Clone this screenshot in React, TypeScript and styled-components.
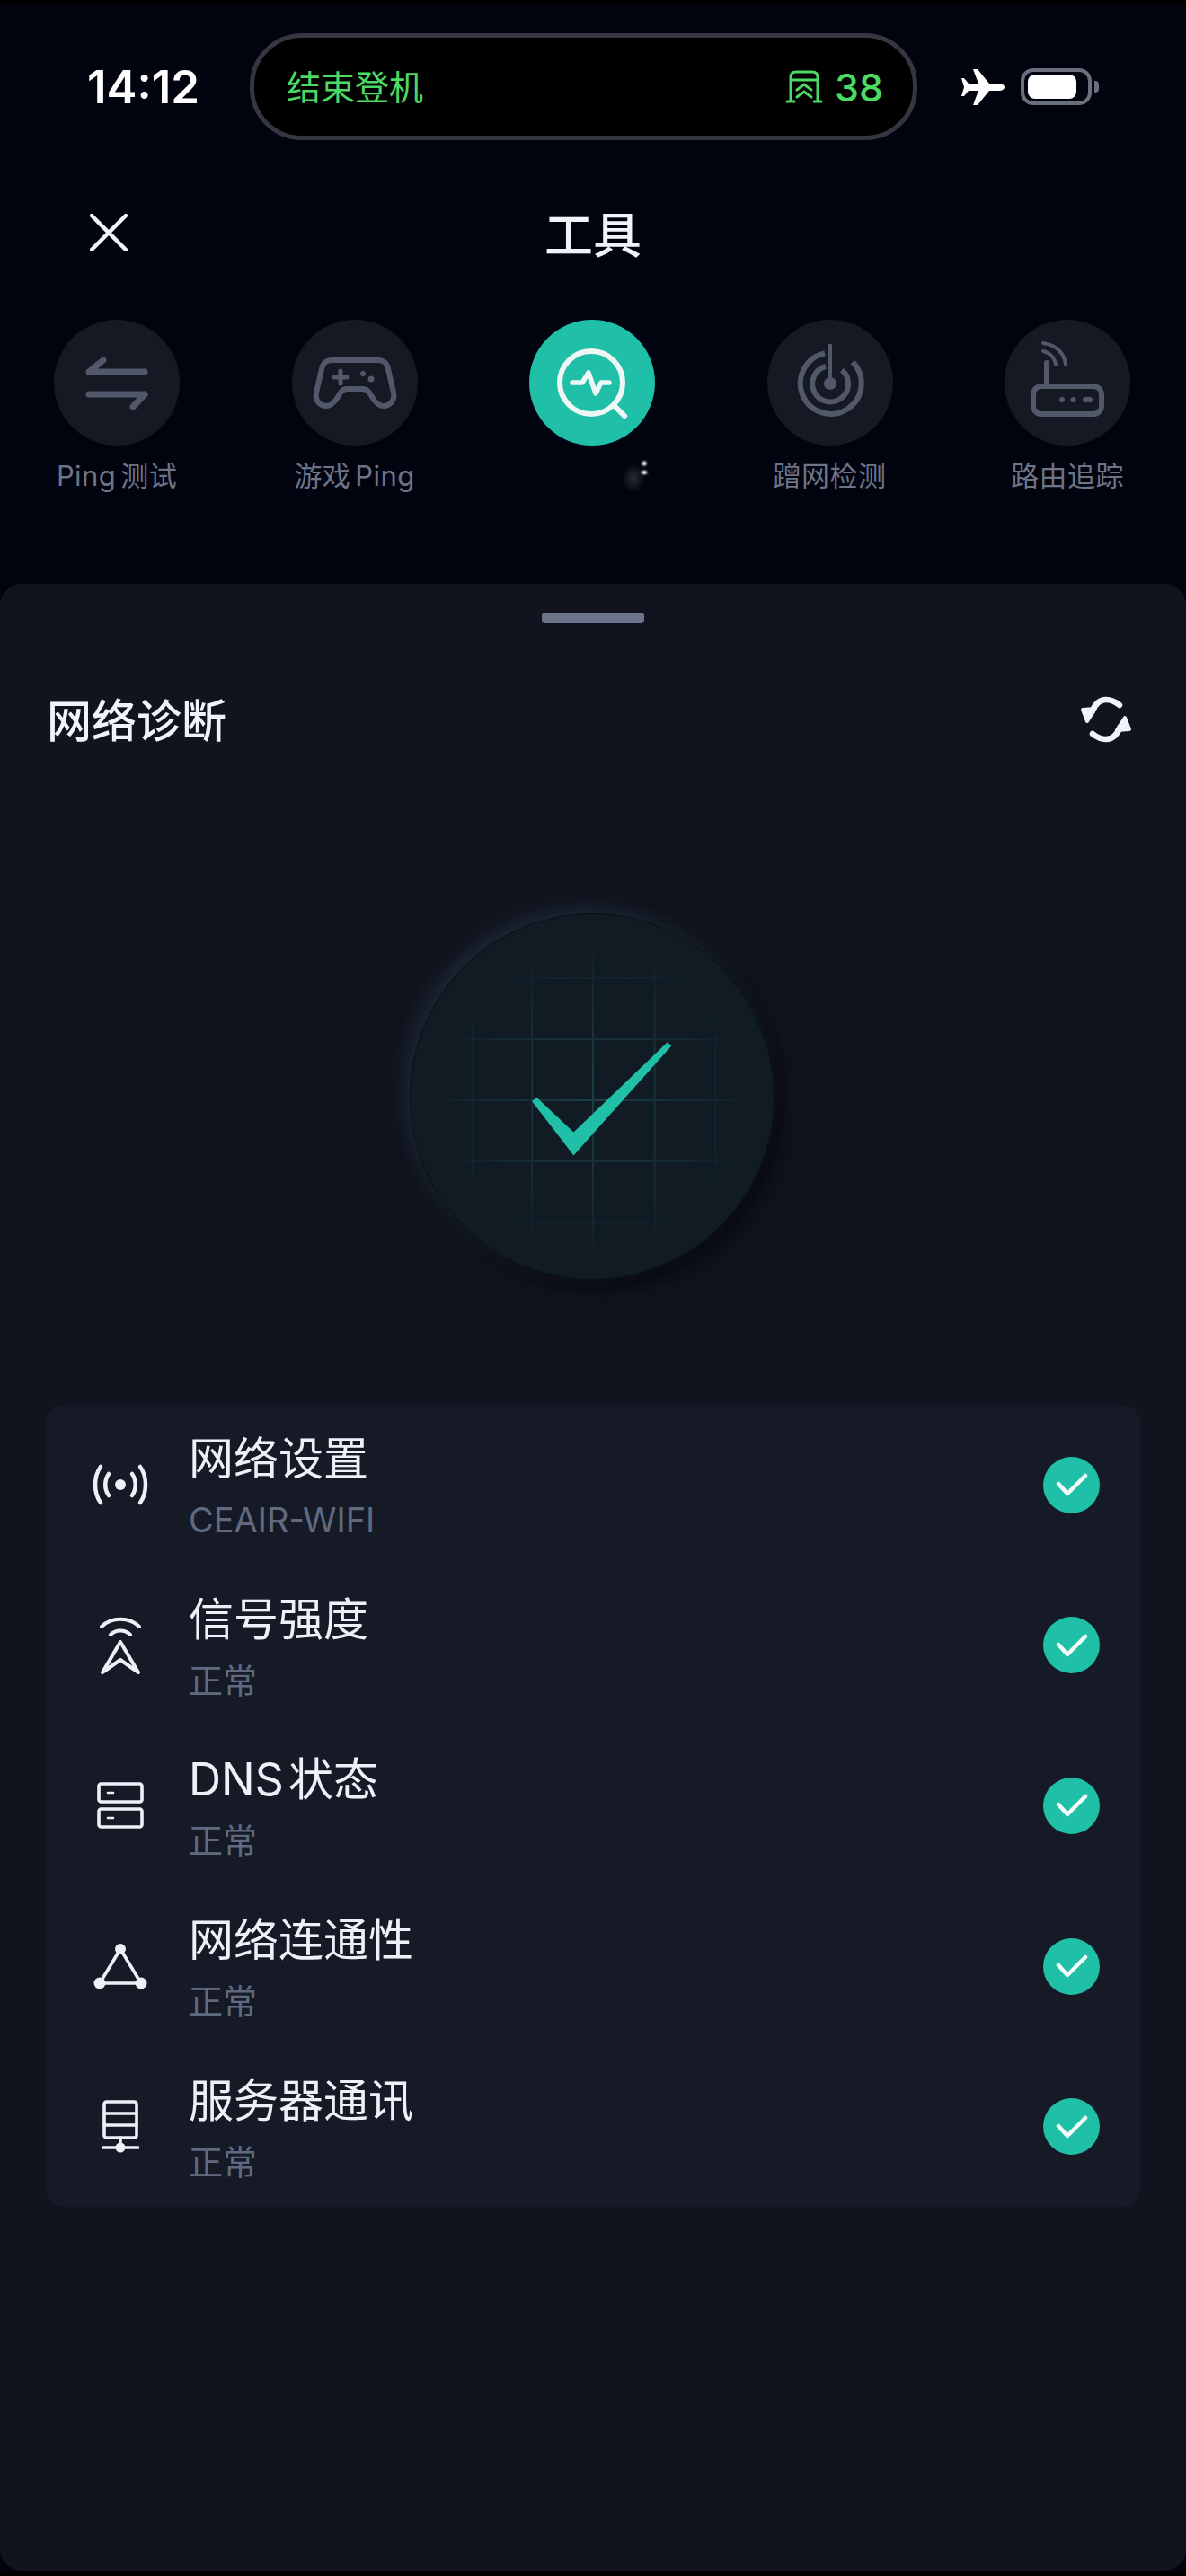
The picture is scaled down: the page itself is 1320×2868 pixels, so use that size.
import { ReactElement } from 'react';
import styled, { createGlobalStyle } from 'styled-components';

const GlobalStyle = createGlobalStyle`
    html, body {
        margin: 0;
        padding: 0;
        background: #000;
    }
    * {
        box-sizing: border-box;
    }
`;

const FONT = `Inter, 'Noto Sans CJK SC', sans-serif`;
const TEAL = '#1fbfa8';
const GREEN = '#4cd964';
const MUTED_ICON = '#50586a';

const Screen = styled.div`
    width: 1320px;
    height: 2856px;
    margin-top: 6px;
    background: #01030f;
    font-family: ${FONT};
    overflow: hidden;
`;

const StatusBar = styled.div`
    display: flex;
    align-items: center;
    padding: 31px 0 0 97px;
`;

const Time = styled.div`
    width: 181px;
    font-size: 51px;
    font-weight: 600;
    color: #fff;
`;

const Island = styled.div`
    width: 743px;
    height: 119px;
    display: flex;
    align-items: center;
    justify-content: space-between;
    padding: 0 33px 0 36px;
    background: #000;
    border: 5px solid #35363f;
    border-radius: 58px;
    color: ${GREEN};
`;

const IslandText = styled.span`
    font-size: 38px;
    line-height: 44px;
`;

const Gate = styled.div`
    display: flex;
    align-items: center;
    gap: 13px;
    font-size: 43px;
    font-weight: 500;
`;

const StatusIcons = styled.div`
    display: flex;
    align-items: center;
    gap: 18px;
    margin-left: 49px;
`;

const Battery = styled.div`
    position: relative;
    width: 79px;
    height: 41px;
    padding: 3px 4px;
    border: 4px solid #6a6f7c;
    border-radius: 14px;

    &::after {
        content: '';
        position: absolute;
        right: -12px;
        top: 10px;
        width: 5px;
        height: 13px;
        border-radius: 0 4px 4px 0;
        background: #6a6f7c;
    }
`;

const BatteryFill = styled.div`
    width: 54px;
    height: 100%;
    border-radius: 8px;
    background: #fff;
`;

const Header = styled.div`
    display: grid;
    grid-template-columns: 1fr auto 1fr;
    align-items: center;
    height: 70px;
    margin-top: 63px;
    padding: 0 100px;
`;

const Title = styled.div`
    font-size: 54px;
    font-weight: 500;
    color: #f2f3f8;
`;

const Tools = styled.div`
    display: flex;
    justify-content: space-between;
    margin-top: 67px;
    padding: 0 62px 0 60px;
`;

const Tool = styled.div`
    display: flex;
    flex-direction: column;
    align-items: center;
    width: 140px;
`;

const ToolCircle = styled.div<{ $active?: boolean }>`
    width: 140px;
    height: 140px;
    border-radius: 50%;
    background: ${(p) => (p.$active ? TEAL : '#161923')};
`;

const ToolLabel = styled.div`
    display: flex;
    justify-content: center;
    height: 40px;
    margin-top: 14px;
    font-size: 31px;
    line-height: 40px;
    letter-spacing: 0.4px;
    word-spacing: -4px;
    color: #6d7486;
    white-space: nowrap;
`;

const Sheet = styled.div`
    height: 2212px;
    margin-top: 100px;
    padding-top: 32px;
    background: #11141f;
    border-radius: 24px;
`;

const Handle = styled.div`
    width: 114px;
    height: 12px;
    margin: 0 auto;
    border-radius: 4px;
    background: #6b7488;
`;

const SheetHeader = styled.div`
    display: flex;
    align-items: center;
    justify-content: space-between;
    height: 60px;
    margin-top: 75px;
    padding: 0 60px 0 52px;
`;

const SheetTitle = styled.div`
    font-size: 50px;
    font-weight: 500;
    color: #f2f3f8;
`;

const RefreshIcon = styled.svg`
    margin-top: 4px;
`;

const Dial = styled.div`
    width: 406px;
    height: 408px;
    margin: 188px 0 139px 456px;
    border-radius: 50%;
    background: #101b24;
    border: 1px solid #0b1119;
    box-shadow: -7px -7px 18px rgba(44, 72, 82, 0.38), 12px 12px 26px rgba(0, 0, 0, 0.5);
`;

const Card = styled.div`
    margin: 0 51px;
    border-radius: 20px;
    background: #161a26;
`;

const Row = styled.div`
    display: flex;
    align-items: center;
    height: 178.6px;
    padding: 0 45px 0 43px;
`;

const RowIcon = styled.div`
    display: flex;
    align-items: center;
    justify-content: center;
    width: 80px;
    margin-right: 36px;
    color: #eef0f8;
`;

const RowText = styled.div`
    flex: 1;
    padding-top: 5px;
`;

const RowTitle = styled.div`
    font-size: 50px;
    line-height: 60px;
    word-spacing: -9px;
    color: #eef0f8;
`;

const RowSub = styled.div`
    margin-top: 13px;
    font-size: 38px;
    line-height: 50px;
    color: #5f6a80;
`;

const Badge = styled.div`
    display: flex;
    align-items: center;
    justify-content: center;
    width: 63px;
    height: 63px;
    border-radius: 50%;
    background: ${TEAL};
`;

const toolSvg = { width: 140, height: 140, viewBox: '0 0 140 140', fill: 'none', strokeLinecap: 'round', strokeLinejoin: 'round' } as const;

function SwapIcon(): ReactElement {
    return (
        <svg {...toolSvg} stroke={MUTED_ICON} strokeWidth={7}>
            <path d="M39 58H101M39 58L55 45M39 83H101M101 83L88 97" />
        </svg>
    );
}

function GamepadIcon(): ReactElement {
    return (
        <svg {...toolSvg} stroke={MUTED_ICON}>
            <g transform="translate(24 41)">
                <path
                    strokeWidth={6}
                    d="M20 4H72C78 4 82 8 83 14L89 40C91 50 84 55 78 55C73 55 70 52 67 48L62 40C60 37 58 36 54 36H38C34 36 32 37 30 40L25 48C22 52 19 55 14 55C8 55 1 50 3 40L9 14C10 8 14 4 20 4Z"
                />
                <path strokeWidth={5} d="M23 23H37M30 16V30" />
                <circle cx={55} cy={19} r={3} fill={MUTED_ICON} stroke="none" />
                <circle cx={64} cy={25} r={3.5} fill={MUTED_ICON} stroke="none" />
            </g>
        </svg>
    );
}

function PulseSearchIcon(): ReactElement {
    return (
        <svg {...toolSvg} stroke="#eef6f6" strokeWidth={6}>
            <circle cx={69} cy={70} r={35} />
            <path d="M94 95L106 107" />
            <path d="M48 70H59L66 59L74 82L80 70H89" strokeWidth={5.5} />
        </svg>
    );
}

function RadarIcon(): ReactElement {
    return (
        <svg {...toolSvg} stroke={MUTED_ICON} strokeWidth={6}>
            <path d="M64 37.5A34 34 0 1 0 95 47" strokeLinecap="butt" />
            <path d="M65 52A20 20 0 1 0 83 56" strokeLinecap="butt" />
            <path d="M70 27V71" strokeWidth={4} strokeLinecap="butt" />
            <circle cx={70} cy={71} r={7} fill={MUTED_ICON} stroke="none" />
        </svg>
    );
}

function RouterIcon(): ReactElement {
    return (
        <svg {...toolSvg} stroke={MUTED_ICON} strokeWidth={6}>
            <rect x={32} y={74} width={76} height={31} rx={9} />
            <path d="M47 71V48" />
            <path d="M43 26C58 28 67 38 68 50M43 35C51 37 56 43 57 50" strokeWidth={4} />
            <circle cx={64} cy={89} r={3} fill={MUTED_ICON} stroke="none" />
            <circle cx={76.5} cy={89} r={3} fill={MUTED_ICON} stroke="none" />
            <rect x={87} y={86} width={11} height={6} rx={3} fill={MUTED_ICON} stroke="none" />
        </svg>
    );
}

// the smudge left where the third label was erased
function LabelSmudge(): ReactElement {
    return (
        <svg width="140" height="40" viewBox="0 0 140 40" style={{ display: 'block' }}>
            <defs>
                <radialGradient id="smudge">
                    <stop offset="0" stopColor="#2a2b33" />
                    <stop offset="1" stopColor="#01030f" />
                </radialGradient>
                <radialGradient id="speck">
                    <stop offset="0" stopColor="#ffffff" />
                    <stop offset="0.4" stopColor="#9a9ca6" />
                    <stop offset="1" stopColor="#01030f" stopOpacity={0} />
                </radialGradient>
            </defs>
            <ellipse cx="116" cy="22" rx="13" ry="16" fill="url(#smudge)" />
            <ellipse cx="128" cy="6" rx="5" ry="5" fill="url(#speck)" />
            <ellipse cx="128" cy="16" rx="6" ry="4.5" fill="url(#speck)" />
        </svg>
    );
}

function BroadcastIcon(): ReactElement {
    return (
        <svg width="64" height="48" viewBox="0 0 64 48" fill="none" stroke="currentColor" strokeWidth={4.5} strokeLinecap="round">
            <path d="M10 4C2 15 2 33 10 44M54 4C62 15 62 33 54 44M19 12C14 19 14 29 19 36M45 12C50 19 50 29 45 36" />
            <circle cx={32} cy={24} r={6} fill="currentColor" stroke="none" />
        </svg>
    );
}

function TowerIcon(): ReactElement {
    return (
        <svg width="46" height="66" viewBox="0 0 46 66" fill="none" stroke="currentColor" strokeWidth={4} strokeLinecap="round" strokeLinejoin="round">
            <path d="M2 12C13 1 33 1 44 12M12 21C18 15 28 15 34 21" />
            <path d="M23 29L3 63L23 49L43 63Z" />
        </svg>
    );
}

function ServerIcon(): ReactElement {
    return (
        <svg width="52" height="52" viewBox="0 0 52 52" fill="none" stroke="currentColor" strokeWidth={3.6} strokeLinecap="round">
            <rect x={2} y={2} width={48} height={20} rx={2.5} />
            <rect x={2} y={30} width={48} height={20} rx={2.5} />
            <path d="M12 12H18M12 40H18" strokeWidth={2.6} />
        </svg>
    );
}

function TriangleIcon(): ReactElement {
    return (
        <svg width="60" height="52" viewBox="0 0 60 52" fill="none" stroke="currentColor" strokeWidth={3.6}>
            <path d="M30 7L7 45H53Z" />
            <circle cx={30} cy={7} r={6} fill="currentColor" stroke="none" />
            <circle cx={7} cy={45} r={6.5} fill="currentColor" stroke="none" />
            <circle cx={53} cy={45} r={6.5} fill="currentColor" stroke="none" />
        </svg>
    );
}

function RackIcon(): ReactElement {
    return (
        <svg width="42" height="60" viewBox="0 0 42 60" fill="none" stroke="currentColor" strokeWidth={3.6} strokeLinecap="round">
            <rect x={3} y={2} width={36} height={40} rx={2.5} />
            <path d="M3 15H39M3 28H39M21 42V53M1 53H41" />
            <circle cx={21} cy={53} r={5.5} fill="currentColor" stroke="none" />
        </svg>
    );
}

function RefreshHalf(): ReactElement {
    return (
        <>
            <path d="M13 18C17 8 22 4 29 4C35 4 39 6 44 10" fill="none" />
            <path d="M3 15L17 14L8 28Z" fill="#f2f3f8" strokeWidth={4} strokeLinejoin="round" />
        </>
    );
}

const tools = [
    { label: 'Ping 测试', icon: <SwapIcon /> },
    { label: '游戏 Ping', icon: <GamepadIcon /> },
    { label: '', icon: <PulseSearchIcon />, active: true },
    { label: '蹭网检测', icon: <RadarIcon /> },
    { label: '路由追踪', icon: <RouterIcon /> },
];

const checks = [
    { title: '网络设置', sub: 'CEAIR-WIFI', icon: <BroadcastIcon /> },
    { title: '信号强度', sub: '正常', icon: <TowerIcon /> },
    { title: 'DNS 状态', sub: '正常', icon: <ServerIcon /> },
    { title: '网络连通性', sub: '正常', icon: <TriangleIcon /> },
    { title: '服务器通讯', sub: '正常', icon: <RackIcon /> },
];

const gridX = [69, 136, 204, 273, 341];
const gridY = [71, 140, 208, 276, 345];

export default function App(): ReactElement {
    return (
        <Screen>
            <GlobalStyle />
            <StatusBar>
                <Time>14:12</Time>
                <Island>
                    <IslandText>结束登机</IslandText>
                    <Gate>
                        <svg width="42" height="38" viewBox="0 0 42 38" fill="none" stroke={GREEN} strokeWidth={3} strokeLinecap="round">
                            <path d="M6 35V8C6 4 8 2 12 2H30C34 2 36 4 36 8V35M6 11H36M2 35H10M32 35H40" />
                            <path d="M13 22L21 16L29 22M13 30L21 24L29 30" />
                        </svg>
                        38
                    </Gate>
                </Island>
                <StatusIcons>
                    <svg width="48" height="40" viewBox="0 0 48 40" fill="#fff">
                        <path d="M48 20C48 17.5 45 16 42 16H31L18 0H13L19 16H8L3 10H0L3 20L0 30H3L8 24H19L13 40H18L31 24H42C45 24 48 22.5 48 20Z" />
                    </svg>
                    <Battery>
                        <BatteryFill />
                    </Battery>
                </StatusIcons>
            </StatusBar>

            <Header>
                <svg width="42" height="42" viewBox="0 0 42 42" fill="none" stroke="#f2f3f8" strokeWidth={4.5} strokeLinecap="round">
                    <path d="M2 2L40 40M40 2L2 40" />
                </svg>
                <Title>工具</Title>
            </Header>

            <Tools>
                {tools.map((tool) => (
                    <Tool key={tool.label || 'active'}>
                        <ToolCircle $active={tool.active}>{tool.icon}</ToolCircle>
                        <ToolLabel>{tool.label || <LabelSmudge />}</ToolLabel>
                    </Tool>
                ))}
            </Tools>

            <Sheet>
                <Handle />
                <SheetHeader>
                    <SheetTitle>网络诊断</SheetTitle>
                    <RefreshIcon width="58" height="52" viewBox="0 0 58 52" fill="none" stroke="#f2f3f8" strokeWidth={6.5} strokeLinecap="round">
                        <RefreshHalf />
                        <g transform="rotate(180 29 26)">
                            <RefreshHalf />
                        </g>
                    </RefreshIcon>
                </SheetHeader>

                <Dial>
                    <svg width="404" height="406" viewBox="0 0 406 408" fill="none">
                        <defs>
                            <radialGradient id="gridFade" gradientUnits="userSpaceOnUse" cx="204" cy="208" r="185">
                                <stop offset="0" stopColor="#1b4043" />
                                <stop offset="0.45" stopColor="#173036" />
                                <stop offset="0.8" stopColor="#13242c" />
                                <stop offset="1" stopColor="#101b24" stopOpacity={0} />
                            </radialGradient>
                        </defs>
                        <g stroke="url(#gridFade)" strokeWidth={2}>
                            {gridX.map((x) => (
                                <path key={x} d={`M${x} 25V385`} />
                            ))}
                            {gridY.map((y) => (
                                <path key={y} d={`M25 ${y}H385`} />
                            ))}
                        </g>
                        <path d="M135.7 209L141.3 205L182.3 243.7L287.3 143L291.7 147.3L182.3 269.7Z" fill={TEAL} />
                    </svg>
                </Dial>

                <Card>
                    {checks.map((check) => (
                        <Row key={check.title}>
                            <RowIcon>{check.icon}</RowIcon>
                            <RowText>
                                <RowTitle>{check.title}</RowTitle>
                                <RowSub>{check.sub}</RowSub>
                            </RowText>
                            <Badge>
                                <svg width="36" height="28" viewBox="0 0 36 28" fill="none" stroke="#f4fbfa" strokeWidth={4.5} strokeLinecap="round" strokeLinejoin="round">
                                    <path d="M3 13L13 24L33 4" />
                                </svg>
                            </Badge>
                        </Row>
                    ))}
                </Card>
            </Sheet>
        </Screen>
    );
}
